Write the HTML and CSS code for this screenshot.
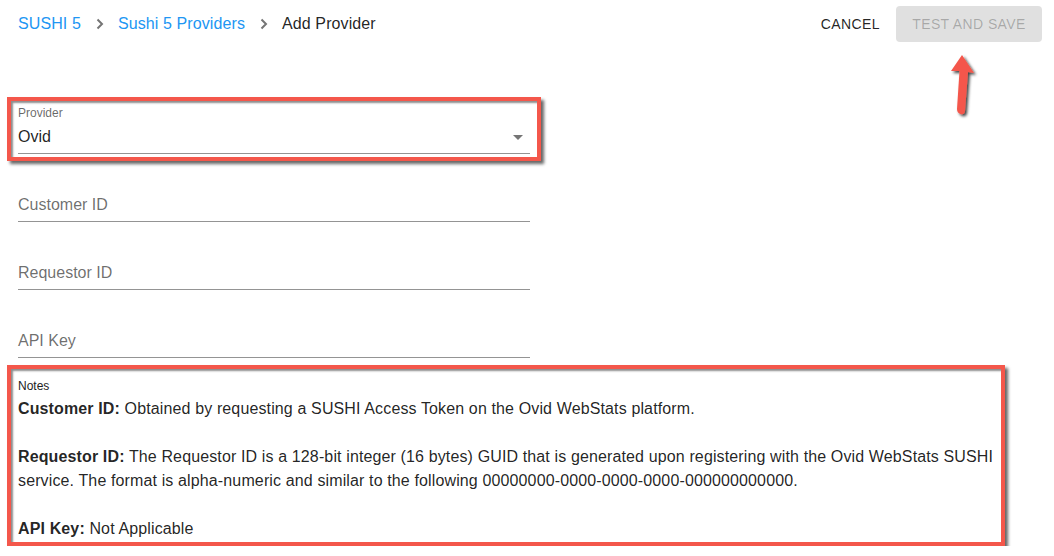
FILE: index.html
```html
<!DOCTYPE html>
<html lang="en">
  <head>
    <meta charset="UTF-8" />
    <meta name="viewport" content="width=device-width, initial-scale=1.0" />
    <title>Add Provider</title>
    <link rel="stylesheet" href="styles.css">
  </head>
  <body>
    <div class="page">
      <header class="topbar">
        <nav class="crumbs">
          <a href="#">SUSHI 5</a>
          <svg class="sep" width="8" height="12" viewBox="0 0 8 12"><path d="M1.5 1.5 6 6l-4.5 4.5" fill="none" stroke="#757575" stroke-width="2"/></svg>
          <a href="#">Sushi 5 Providers</a>
          <svg class="sep" width="8" height="12" viewBox="0 0 8 12"><path d="M1.5 1.5 6 6l-4.5 4.5" fill="none" stroke="#757575" stroke-width="2"/></svg>
          <span class="current">Add Provider</span>
        </nav>
        <div class="actions">
          <button class="btn-text">Cancel</button>
          <button class="btn-save" disabled>Test and Save</button>
        </div>
      </header>

      <form class="form">
        <div class="highlight">
          <div class="field">
            <label class="label">Provider</label>
            <div class="input select">
              <span>Ovid</span>
              <svg width="10" height="5" viewBox="0 0 10 5"><path d="M0 0h10L5 5z" fill="#757575"/></svg>
            </div>
          </div>
        </div>
        <div class="field">
          <label class="label"></label>
          <div class="input placeholder">Customer ID</div>
        </div>
        <div class="field">
          <label class="label"></label>
          <div class="input placeholder">Requestor ID</div>
        </div>
        <div class="field">
          <label class="label"></label>
          <div class="input placeholder">API Key</div>
        </div>

        <div class="highlight notes">
          <div class="notes-label">Notes</div>
          <p><b>Customer ID:</b> Obtained by requesting a SUSHI Access Token on the Ovid WebStats platform.<br><br><b>Requestor ID:</b> The Requestor ID is a 128-bit integer (16 bytes) GUID that is generated upon registering with the Ovid WebStats SUSHI service. The format is alpha-numeric and similar to the following 00000000-0000-0000-0000-000000000000.<br><br><b>API Key:</b> Not Applicable</p>
        </div>
      </form>

      <!-- annotation arrow pointing at the save button -->
      <svg class="arrow" width="40" height="72" viewBox="0 0 40 72">
        <defs>
          <filter id="drop" x="-50%" y="-50%" width="200%" height="200%">
            <feDropShadow dx="2" dy="2" stdDeviation="1.5" flood-color="#000" flood-opacity="0.75"/>
          </filter>
        </defs>
        <path d="M19 4 L31 22 L25 21 L22 60 Q21.5 64 17.5 63 Q14 62 14 58 L16.5 20 L8 20 Z" fill="#f4574b" filter="url(#drop)"/>
      </svg>
    </div>
  </body>
</html>
```

FILE: styles.css
```css
body {
  margin: 0;
  font-family: "Liberation Sans", Arial, sans-serif;
  color: rgba(0, 0, 0, 0.87);
  background: #fff;
}
.page {
  position: relative;
  padding: 0 12px 0 18px;
}
.topbar {
  display: flex;
  align-items: center;
  justify-content: space-between;
  height: 48px;
}
.crumbs {
  display: flex;
  align-items: center;
  font-size: 16px;
  letter-spacing: 0.1px;
}
.crumbs a {
  color: #2196f3;
  text-decoration: none;
}
.crumbs .sep {
  margin: 0 14px 0 15px;
}
.actions {
  display: flex;
  align-items: center;
  gap: 8px;
}
.btn-text,
.btn-save {
  font-family: inherit;
  font-size: 14px;
  font-weight: 400;
  text-transform: uppercase;
  letter-spacing: 0.4px;
  border: 0;
  border-radius: 4px;
  height: 36px;
  cursor: pointer;
}
.btn-text {
  background: none;
  color: rgba(0, 0, 0, 0.87);
  padding: 0 8px;
}
.btn-save {
  background: #e0e0e0;
  color: rgba(0, 0, 0, 0.26);
  padding: 0 8px;
  width: 146px;
}
.form {
  margin-top: 49px;
  width: 512px;
}
.highlight {
  border: 4px solid #f4574b;
  margin: 0 -11px;
  padding: 4px 7px 3px 7px;
  box-shadow: inset 2px 2px 2px rgba(0, 0, 0, 0.45), 3px 3px 3px rgba(0, 0, 0, 0.6);
}
.field {
  margin-top: 19px;
}
.highlight .field {
  margin-top: 0;
}
.highlight + .field {
  margin-top: 12px;
}
.label {
  display: block;
  height: 16px;
  font-size: 12px;
  line-height: 16px;
  color: rgba(0, 0, 0, 0.6);
}
.input {
  height: 32px;
  line-height: 32px;
  font-size: 16px;
  border-bottom: 1px solid rgba(0, 0, 0, 0.42);
}
.select {
  display: flex;
  align-items: center;
  justify-content: space-between;
  padding-right: 7px;
}
.placeholder {
  color: rgba(0, 0, 0, 0.58);
}
.notes {
  width: 980px;
  margin-top: 7px;
  padding: 9px 3px 1px 7px;
}
.notes-label {
  font-size: 12px;
  line-height: 16px;
  color: #222;
}
.notes p {
  margin: 3px 0 0;
  font-size: 16px;
  line-height: 24px;
  letter-spacing: 0.13px;
}
.notes b {
  font-weight: 700;
}
.arrow {
  position: absolute;
  left: 943px;
  top: 51px;
}
```
